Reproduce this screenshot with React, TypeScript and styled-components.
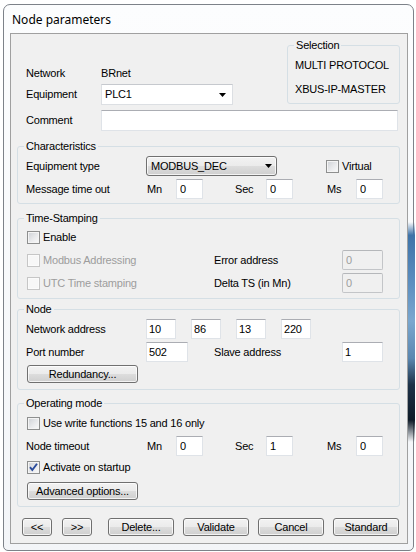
import React from "react";
import styled, { createGlobalStyle } from "styled-components";

const GlobalStyle = createGlobalStyle`
  html, body { margin: 0; padding: 0; background: #ffffff; }
  body {
    font-family: "Liberation Sans", Arial, sans-serif;
    font-size: 11px;
    color: #000;
  }
  * { box-sizing: border-box; }
`;

const Page = styled.div`
  position: relative;
  width: 416px;
  height: 552px;
  padding: 4px 0 0 3px;
  overflow: hidden;
`;

const GlassStreak = styled.div`
  position: absolute;
  left: 408px;
  top: 222px;
  width: 7px;
  height: 220px;
  background: linear-gradient(
    180deg,
    rgba(63, 115, 168, 0) 0%,
    #3f73a8 6%,
    #5d8fc0 28%,
    #7aa7cf 45%,
    #5b87b0 62%,
    #1d3248 74%,
    #0f1b28 90%,
    rgba(15, 27, 40, 0) 100%
  );
`;

const Window = styled.div`
  width: 411px;
  height: 547px;
  border: 1px solid #7d8289;
  border-radius: 7px 7px 5px 5px;
  background: linear-gradient(180deg, #fcfdfe 0%, #f3f5f8 100%);
  padding: 0 5px 6px 6px;
  display: flex;
  flex-direction: column;
`;

const TitleBar = styled.div`
  height: 28px;
  flex: none;
  display: flex;
  align-items: center;
  padding-left: 2px;
  font-family: "Noto Sans", "Open Sans", sans-serif;
  font-size: 12px;
  color: #000;
`;

const Client = styled.div`
  flex: 1;
  border: 1px solid #a0a0a0;
  background: #f0f0f0;
  padding: 0 7px 0 6px;
  display: flex;
  flex-direction: column;
`;

const UpperRow = styled.div`
  display: flex;
  justify-content: space-between;
  align-items: flex-start;
`;

const LeftCol = styled.div`
  padding: 29px 0 0 9px;
  display: flex;
  flex-direction: column;
`;

const GroupBox = styled.fieldset<{ $mt?: number; $pt: number; $pb: number; $pl?: number; $w?: number }>`
  margin: ${(p) => p.$mt ?? 0}px 0 0 0;
  padding: ${(p) => p.$pt}px 0 ${(p) => p.$pb}px ${(p) => p.$pl ?? 8}px;
  border: 1px solid #d5dfe5;
  border-radius: 3px;
  min-width: 0;
  flex: none;
  ${(p) => (p.$w ? `width: ${p.$w}px;` : "")}
`;

const Caption = styled.legend<{ $ml?: number }>`
  padding: 0 2px;
  margin-left: ${(p) => p.$ml ?? -2}px;
  line-height: 13px;
  font-size: 11px;
  letter-spacing: -0.2px;
`;

const Row = styled.div<{ $h?: number; $mt?: number; $pl?: number }>`
  display: flex;
  align-items: center;
  height: ${(p) => p.$h ?? 20}px;
  margin-top: ${(p) => p.$mt ?? 0}px;
  padding-left: ${(p) => p.$pl ?? 0}px;
  white-space: nowrap;
  flex: none;
`;

const Text = styled.span<{ $w?: number; $ml?: number; $disabled?: boolean }>`
  display: inline-block;
  flex: none;
  width: ${(p) => (p.$w ? `${p.$w}px` : "auto")};
  margin-left: ${(p) => p.$ml ?? 0}px;
  line-height: 13px;
  letter-spacing: -0.2px;
  color: ${(p) => (p.$disabled ? "#9d9d9d" : "#000")};
`;

const Field = styled.input<{ $w: number; $h?: number; $ml?: number; $pl?: number; $disabled?: boolean }>`
  flex: none;
  width: ${(p) => p.$w}px;
  height: ${(p) => p.$h ?? 20}px;
  margin: 0 0 0 ${(p) => p.$ml ?? 0}px;
  padding: 0 0 0 ${(p) => p.$pl ?? 2}px;
  font: inherit;
  font-size: 11px;
  letter-spacing: -0.2px;
  outline: none;
  background: ${(p) => (p.$disabled ? "#f0f0f0" : "#ffffff")};
  color: ${(p) => (p.$disabled ? "#9d9d9d" : "#000")};
  border: 1px solid ${(p) => (p.$disabled ? "#c3c5c8" : "#dfe3e8")};
  border-top-color: ${(p) => (p.$disabled ? "#b5b7ba" : "#abadb3")};
  border-radius: ${(p) => (p.$disabled ? 2 : 0)}px;
`;

const ListCombo = styled.div<{ $w: number }>`
  flex: none;
  width: ${(p) => p.$w}px;
  height: 21px;
  display: flex;
  align-items: center;
  justify-content: space-between;
  padding: 0 6px 0 3px;
  background: #ffffff;
  border: 1px solid #dcdfe3;
  border-top-color: #c6c9ce;
`;

const ButtonCombo = styled.div<{ $w: number }>`
  flex: none;
  width: ${(p) => p.$w}px;
  height: 20px;
  display: flex;
  align-items: center;
  justify-content: space-between;
  padding: 0 4px 0 4px;
  border: 1px solid #707070;
  border-radius: 3px;
  background: linear-gradient(180deg, #f2f2f2 0%, #ebebeb 50%, #dddddd 50%, #cfcfcf 100%);
  box-shadow: inset 0 0 0 1px rgba(255, 255, 255, 0.75);
`;

const ComboText = styled.span`
  line-height: 13px;
  letter-spacing: -0.2px;
`;

const Button = styled.button<{ $w: number; $ml?: number }>`
  flex: none;
  width: ${(p) => p.$w}px;
  height: 18px;
  margin: 0 0 0 ${(p) => p.$ml ?? 0}px;
  padding: 0;
  font: inherit;
  font-size: 11px;
  letter-spacing: -0.2px;
  line-height: 13px;
  color: #000;
  border: 1px solid #707070;
  border-radius: 3px;
  background: linear-gradient(180deg, #f2f2f2 0%, #ebebeb 50%, #dddddd 50%, #cfcfcf 100%);
  box-shadow: inset 0 0 0 1px rgba(255, 255, 255, 0.75);
`;

const ButtonBar = styled.div`
  display: flex;
  align-items: center;
  height: 18px;
  margin-top: 11px;
  padding-left: 5px;
  flex: none;
`;

const CheckBox = styled.span<{ $ml?: number; $disabled?: boolean }>`
  flex: none;
  position: relative;
  display: inline-block;
  width: 13px;
  height: 13px;
  margin-left: ${(p) => p.$ml ?? 0}px;
  border: 1px solid ${(p) => (p.$disabled ? "#c6c6c6" : "#8e8f8f")};
  background: ${(p) =>
    p.$disabled
      ? "#f7f7f7"
      : "linear-gradient(135deg, #cdd0d5 0%, #e9eaec 55%, #fafafa 100%)"};
  box-shadow: inset 0 0 0 1px ${(p) => (p.$disabled ? "#fbfbfb" : "#f4f4f4")};
`;

const CheckMark = styled.svg`
  position: absolute;
  left: 0;
  top: 0;
`;

function Arrow() {
  return (
    <svg width="7" height="4" viewBox="0 0 7 4">
      <polygon points="0,0 7,0 3.5,4" fill="#000" />
    </svg>
  );
}

function Check({ ml, disabled, checked }: { ml?: number; disabled?: boolean; checked?: boolean }) {
  return (
    <CheckBox $ml={ml} $disabled={disabled}>
      {checked && (
        <CheckMark width="11" height="11" viewBox="0 0 11 11">
          <path d="M2 5.2 L4.3 8 L9 1.8" fill="none" stroke="#2a4b9b" strokeWidth="1.9" strokeLinejoin="miter" />
        </CheckMark>
      )}
    </CheckBox>
  );
}

function TimeRow({ label, mn, sec, ms, mt }: { label: string; mn: string; sec: string; ms: string; mt: number }) {
  return (
    <Row $mt={mt}>
      <Text $w={121}>{label}</Text>
      <Text $w={29}>Mn</Text>
      <Field $w={27} $pl={3} readOnly defaultValue={mn} />
      <Text $w={31} $ml={32}>Sec</Text>
      <Field $w={27} $pl={3} readOnly defaultValue={sec} />
      <Text $w={29} $ml={34}>Ms</Text>
      <Field $w={27} $pl={3} readOnly defaultValue={ms} />
    </Row>
  );
}

export default function App() {
  return (
    <>
      <GlobalStyle />
      <Page>
        <Window>
          <TitleBar>Node parameters</TitleBar>
          <Client>
            <UpperRow>
              <LeftCol>
                <Row $h={20}>
                  <Text $w={75}>Network</Text>
                  <Text>BRnet</Text>
                </Row>
                <Row $h={21} $mt={1}>
                  <Text $w={75}>Equipment</Text>
                  <ListCombo $w={132}>
                    <ComboText>PLC1</ComboText>
                    <Arrow />
                  </ListCombo>
                </Row>
              </LeftCol>
              <GroupBox $w={113} $mt={5} $pt={6} $pb={7} $pl={7}>
                <Caption $ml={-1}>Selection</Caption>
                <Row $h={14}>
                  <Text>MULTI PROTOCOL</Text>
                </Row>
                <Row $h={14} $mt={10}>
                  <Text>XBUS-IP-MASTER</Text>
                </Row>
              </GroupBox>
            </UpperRow>

            <Row $h={21} $mt={5} $pl={9}>
              <Text $w={75}>Comment</Text>
              <Field $w={297} $h={21} readOnly defaultValue="" />
            </Row>

            <GroupBox $mt={9} $pt={3} $pb={4}>
              <Caption>Characteristics</Caption>
              <Row>
                <Text $w={120}>Equipment type</Text>
                <ButtonCombo $w={131}>
                  <ComboText>MODBUS_DEC</ComboText>
                  <Arrow />
                </ButtonCombo>
                <Check ml={49} />
                <Text $ml={3}>Virtual</Text>
              </Row>
              <TimeRow label="Message time out" mn="0" sec="0" ms="0" mt={3} />
            </GroupBox>

            <GroupBox $mt={8} $pt={2} $pb={5}>
              <Caption>Time-Stamping</Caption>
              <Row>
                <Check ml={1} />
                <Text $ml={3}>Enable</Text>
              </Row>
              <Row $mt={3}>
                <Check ml={1} disabled />
                <Text $ml={3} $w={171} $disabled>
                  Modbus Addressing
                </Text>
                <Text $w={128}>Error address</Text>
                <Field $w={41} $pl={3} $disabled readOnly defaultValue="0" />
              </Row>
              <Row $mt={3}>
                <Check ml={1} disabled />
                <Text $ml={3} $w={171} $disabled>
                  UTC Time stamping
                </Text>
                <Text $w={128}>Delta TS (in Mn)</Text>
                <Field $w={41} $pl={3} $disabled readOnly defaultValue="0" />
              </Row>
            </GroupBox>

            <GroupBox $mt={4} $pt={3} $pb={6}>
              <Caption>Node</Caption>
              <Row>
                <Text $w={120}>Network address</Text>
                <Field $w={30} readOnly defaultValue="10" />
                <Field $w={30} $ml={15} readOnly defaultValue="86" />
                <Field $w={30} $ml={15} readOnly defaultValue="13" />
                <Field $w={30} $ml={15} readOnly defaultValue="220" />
              </Row>
              <Row $mt={3}>
                <Text $w={120}>Port number</Text>
                <Field $w={42} readOnly defaultValue="502" />
                <Text $w={128} $ml={26}>Slave address</Text>
                <Field $w={41} readOnly defaultValue="1" />
              </Row>
              <Row $mt={3} $h={18}>
                <Button $w={111} $ml={1}>Redundancy...</Button>
              </Row>
            </GroupBox>

            <GroupBox $mt={7} $pt={3} $pb={6}>
              <Caption>Operating mode</Caption>
              <Row>
                <Check ml={1} />
                <Text $ml={3}>Use write functions 15 and 16 only</Text>
              </Row>
              <TimeRow label="Node timeout" mn="0" sec="1" ms="0" mt={3} />
              <Row $mt={1}>
                <Check ml={1} checked />
                <Text $ml={3}>Activate on startup</Text>
              </Row>
              <Row $mt={5} $h={18}>
                <Button $w={111} $ml={1}>Advanced options...</Button>
              </Row>
            </GroupBox>

            <ButtonBar>
              <Button $w={30}>&lt;&lt;</Button>
              <Button $w={30} $ml={10}>&gt;&gt;</Button>
              <Button $w={66} $ml={16}>Delete...</Button>
              <Button $w={66} $ml={9}>Validate</Button>
              <Button $w={66} $ml={9}>Cancel</Button>
              <Button $w={66} $ml={9}>Standard</Button>
            </ButtonBar>
          </Client>
        </Window>
        <GlassStreak />
      </Page>
    </>
  );
}
